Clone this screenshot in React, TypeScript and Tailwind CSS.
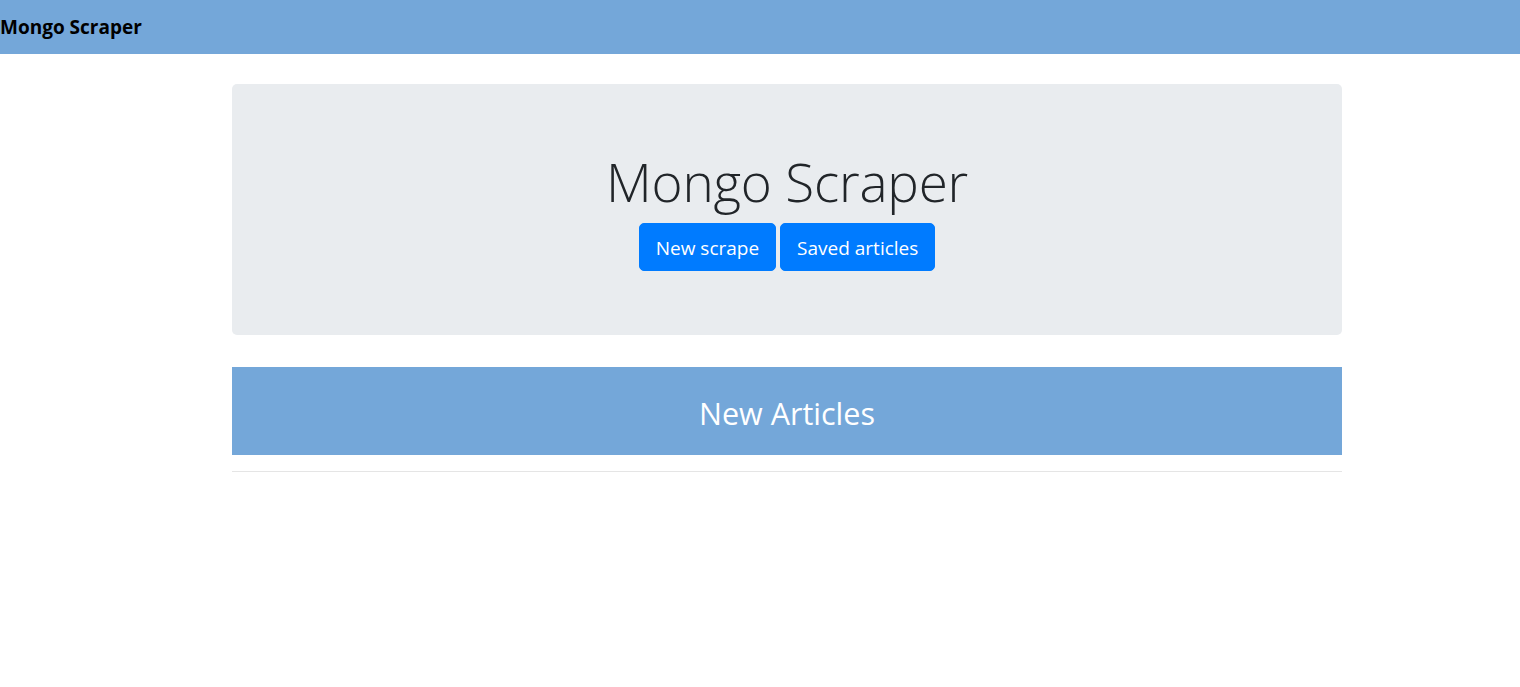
export default function App() {
  return (
    <div className="min-h-screen bg-white font-['Segoe_UI','Open_Sans',sans-serif] text-[#212529]">
      <nav className="flex h-[54px] items-center bg-[#74a7d9]">
        <span className="text-[19px] font-bold text-black">Mongo Scraper</span>
      </nav>

      <div className="ml-[232px] w-[1110px] pt-[30px]">
        <div className="flex flex-col items-center rounded-[5px] bg-[#e9ecef] px-8 py-16">
          <h1 className="mb-2 text-[53px] font-light leading-[67px] tracking-[-0.2px]">Mongo Scraper</h1>
          <div className="flex gap-1">
            <button className="rounded-[5px] border border-[#007bff] bg-[#007bff] px-4 pt-[9px] pb-[7px] text-[19px] leading-[30px] text-white">
              New scrape
            </button>
            <button className="rounded-[5px] border border-[#007bff] bg-[#007bff] px-4 pt-[9px] pb-[7px] text-[19px] leading-[30px] text-white">
              Saved articles
            </button>
          </div>
        </div>

        <div className="mt-8 flex h-[88px] items-center justify-center bg-[#74a7d9]">
          <h2 className="mt-1 text-[30.5px] leading-[1.2] text-white">New Articles</h2>
        </div>
        <hr className="mt-4 border-t border-black/10" />
      </div>
    </div>
  );
}
